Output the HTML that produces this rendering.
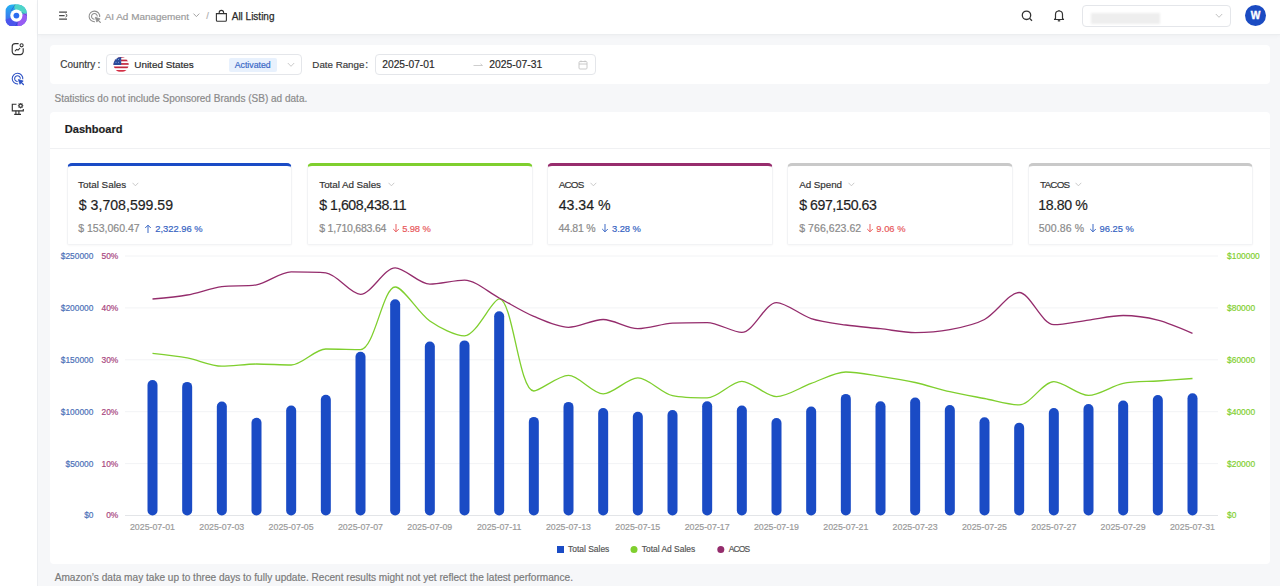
<!DOCTYPE html>
<html><head><meta charset="utf-8">
<style>
html,body{margin:0;padding:0}
body{width:1280px;height:586px;overflow:hidden;position:relative;background:#f6f7f9;font-family:"Liberation Sans",sans-serif}
.abs{position:absolute}
.t{position:absolute;white-space:pre;-webkit-text-stroke:0.1px currentColor}
.side{position:absolute;left:0;top:0;width:38px;height:586px;background:#fff;border-right:1px solid #eceef1;box-sizing:border-box}
.head{position:absolute;left:38px;top:0;width:1242px;height:35px;background:#fff;border-bottom:1px solid #eceef0;box-sizing:border-box;box-shadow:0 1px 4px rgba(0,0,0,0.035)}
.panel{position:absolute;left:50px;width:1220px;background:#fff;border-radius:4px}
.card{position:absolute;top:162.5px;width:225.5px;height:82px;box-sizing:border-box;background:#fff;border:1px solid #f2f3f5;border-top:3px solid #1a4bc5;border-radius:5px 5px 2px 2px;box-shadow:0 1px 2px rgba(0,0,0,0.03)}
.box{position:absolute;background:#fff;border:1px solid #e4e6ea;border-radius:4px;box-sizing:border-box}
</style></head><body>
<div class="side"></div>
<div class="head"></div>
<div class="panel" style="top:45px;height:39px"></div>
<div class="panel" style="top:112px;height:452px"></div>
<div class="abs" style="left:50px;top:148px;width:1220px;height:1px;background:#f0f1f3"></div>

<!-- logo -->
<svg class="abs" style="left:0;top:0" width="38" height="34" viewBox="0 0 38 34">
  <defs>
    <clipPath id="lgc"><path d="M5.6 11.2A6.4 6.4 0 0 1 12 4.6H18A9 9 0 0 1 26.9 13.6V17.5A8.6 8.6 0 0 1 18.3 26.1H12A6.4 6.4 0 0 1 5.6 19.7Z"/></clipPath>
    <linearGradient id="lgL" x1="0" y1="0" x2="0" y2="1"><stop offset="0" stop-color="#22b6f3"/><stop offset="1" stop-color="#4a53ea"/></linearGradient>
  </defs>
  <g clip-path="url(#lgc)">
    <rect x="5" y="4" width="23" height="23" fill="url(#lgL)"/>
    <path d="M16.4 15.6L13.5 4L28 4L28 15Z" fill="#4fd5c8"/>
    <path d="M16.4 15.6L28 13L28 27L17 27Z" fill="#985cf3"/>
    <path d="M16.4 15.6L5 20L5 27L18 27Z" fill="#4b55ec"/>
    <path d="M10.9 11.2L15.4 4.2M21.8 12.3L27 15.5M18.5 21.2L15 27" stroke="#2b3aa8" stroke-width="0.7" opacity="0.6"/>
  </g>
  <circle cx="16.4" cy="15.6" r="6.1" fill="#fff"/>
  <circle cx="16.4" cy="15.6" r="2.9" fill="#2a6cf0"/>
</svg>
<!-- sidebar icons -->
<svg class="abs" style="left:0;top:34px" width="38" height="90" viewBox="0 34 38 90">
  <path d="M18.6 43.6H15.2A3 3 0 0 0 12.2 46.6V51.6A3 3 0 0 0 15.2 54.6H20.2A3 3 0 0 0 23.2 51.6V48.2" fill="none" stroke="#333" stroke-width="1.15"/>
  <circle cx="21.6" cy="45.3" r="1.55" fill="none" stroke="#333" stroke-width="1.1"/>
  <path d="M15.2 50.8L16.7 49.4 18 50.1 19.8 48.3" fill="none" stroke="#333" stroke-width="1.1" stroke-linecap="round" stroke-linejoin="round"/>
  <g transform="translate(17.5 78.6)" fill="none" stroke="#2c50c4" stroke-width="1.05">
    <path d="M5.28 0.6A5.3 5.3 0 1 0 0.6 5.28"/>
    <path d="M2.85 0.1A2.85 2.85 0 1 0 0.1 2.85"/>
    <path d="M0.9 0.9L5.7 2.5 3.6 3.6 2.5 5.7Z" fill="#2c50c4" stroke-linejoin="round" stroke-width="0.8"/>
    <path d="M3.4 3.4L5.9 5.9" stroke-linecap="round" stroke-width="1.2"/>
  </g>
  <path d="M16.5 104.2H12.3V110.8H23.3V109" fill="none" stroke="#333" stroke-width="1.15"/>
  <path d="M15.9 110.8V114.3M18.9 110.8V114.3M14.2 114.4H21" fill="none" stroke="#333" stroke-width="1.15"/>
  <circle cx="20.6" cy="105.7" r="1.7" fill="none" stroke="#333" stroke-width="1.3"/>
  <path d="M20.6 103V103.6M20.6 107.8V108.4M17.9 105.7H18.5M22.7 105.7H23.3M18.7 103.8L19.1 104.2M22.1 107.2L22.5 107.6M22.5 103.8L22.1 104.2M19.1 107.2L18.7 107.6" stroke="#333" stroke-width="1"/>
</svg>
<!-- header icons -->
<svg class="abs" style="left:38px;top:0" width="200" height="34" viewBox="38 0 200 34">
  <path d="M59.1 12H67M59.1 19H67M59.1 15.5H64.6" fill="none" stroke="#4a4a4a" stroke-width="1.25"/>
  <path d="M65.6 14L67.2 15.5 65.6 17" fill="none" stroke="#333" stroke-width="1"/>
  <g transform="translate(94.4 16.4)" fill="none" stroke="#8e8e8e" stroke-width="1.05">
    <path d="M5.28 0.6A5.3 5.3 0 1 0 0.6 5.28"/>
    <path d="M2.85 0.1A2.85 2.85 0 1 0 0.1 2.85"/>
    <path d="M0.9 0.9L5.7 2.5 3.6 3.6 2.5 5.7Z" fill="#8e8e8e" stroke-linejoin="round" stroke-width="0.8"/>
    <path d="M3.4 3.4L5.9 5.9" stroke-linecap="round" stroke-width="1.2"/>
  </g>
  <path d="M193.5 13.6L196.4 16.6 199.3 13.6" fill="none" stroke="#9a9a9a" stroke-width="0.9"/>
  <path d="M216.4 13.6H226.4L226.4 20.2A1 1 0 0 1 225.4 21.2H217.4A1 1 0 0 1 216.4 20.2Z" fill="none" stroke="#333" stroke-width="1.1"/>
  <path d="M219.2 13.6V12.6A2.2 2.2 0 0 1 223.6 12.6V13.6" fill="none" stroke="#333" stroke-width="1.1"/>
</svg>
<!-- search, bell -->
<svg class="abs" style="left:1021px;top:10px" width="13" height="12" viewBox="0 0 13 12">
  <circle cx="5.5" cy="5.3" r="4.2" fill="none" stroke="#333" stroke-width="1.3"/>
  <path d="M8.6 8.4L11 10.8" stroke="#333" stroke-width="1.3"/>
</svg>
<svg class="abs" style="left:1053px;top:9px" width="12" height="13" viewBox="0 0 12 13">
  <path d="M2.5 9.5V5.5A3.5 3.5 0 0 1 9.5 5.5V9.5L10.5 10.5H1.5Z" fill="none" stroke="#333" stroke-width="1.2" stroke-linejoin="round"/>
  <path d="M6 1V2" stroke="#333" stroke-width="1.2"/>
  <path d="M4.8 11.8H7.2" stroke="#333" stroke-width="1.3"/>
</svg>
<div class="box" style="left:1082px;top:4.5px;width:149px;height:22px"></div>
<div class="abs" style="left:1091px;top:13px;width:69px;height:10.5px;background:#eee;filter:blur(1px)"></div>
<svg class="abs" style="left:1215px;top:12.5px" width="8" height="6" viewBox="0 0 8 6"><path d="M0.8 1L4 4.3 7.2 1" fill="none" stroke="#bbb" stroke-width="0.9"/></svg>
<div class="abs" style="left:1245px;top:4.6px;width:21.3px;height:21.3px;border-radius:50%;background:#1b4bc2"></div>
<svg class="abs" style="left:1240px;top:0" width="32" height="32" viewBox="1240 0 32 32"><text x="1255.65" y="18.9" text-anchor="middle" font-family="Liberation Sans" font-weight="700" font-size="10.2" fill="#fff" stroke="#fff" stroke-width="0.35">W</text></svg>

<!-- filter controls -->
<div class="box" style="left:106px;top:54.2px;width:195.5px;height:21px"></div>
<svg class="abs" style="left:108px;top:53px" width="26" height="24" viewBox="108 53 26 24">
  <defs><clipPath id="fc"><circle cx="121.1" cy="64.6" r="7.6"/></clipPath></defs>
  <g clip-path="url(#fc)">
    <rect x="113" y="56" width="16" height="17" fill="#fff"/>
    <rect x="113" y="56.2" width="16" height="1.6" fill="#c2283f"/>
    <rect x="113" y="59.6" width="16" height="1.7" fill="#c2283f"/>
    <rect x="113" y="63.1" width="16" height="1.7" fill="#c2283f"/>
    <rect x="113" y="66.5" width="16" height="1.7" fill="#c2283f"/>
    <rect x="113" y="70" width="16" height="1.7" fill="#d42f45"/>
    <rect x="113" y="56" width="8.2" height="9" fill="#2b4b9b"/>
    <g fill="#9fb4e6"><circle cx="116" cy="59.5" r="0.5"/><circle cx="118.5" cy="59.5" r="0.5"/><circle cx="116" cy="62.3" r="0.5"/><circle cx="118.5" cy="62.3" r="0.5"/><circle cx="120.3" cy="60.9" r="0.4"/></g>
  </g>
</svg>
<div class="abs" style="left:229px;top:58px;width:47.5px;height:14px;background:#e8f1fd;border-radius:2px"></div>
<svg class="abs" style="left:286.5px;top:61.6px" width="8" height="6" viewBox="0 0 8 6"><path d="M0.8 1L4 4.3 7.2 1" fill="none" stroke="#c4c4c4" stroke-width="0.9"/></svg>
<div class="box" style="left:374.5px;top:54.2px;width:221px;height:21px"></div>
<svg class="abs" style="left:473px;top:62px" width="11" height="6" viewBox="0 0 11 6"><path d="M0.5 3.5H9.5M7.5 1.8L9.5 3.5" fill="none" stroke="#c8c8c8" stroke-width="0.9"/></svg>
<svg class="abs" style="left:577.5px;top:60px" width="10" height="10" viewBox="0 0 10 10">
  <rect x="1" y="1.5" width="8" height="7.5" rx="1" fill="none" stroke="#c4c4c4" stroke-width="0.9"/>
  <path d="M1 4H9M3 0.5V2.2M7 0.5V2.2" stroke="#c4c4c4" stroke-width="0.9"/>
</svg>

<div class="card" style="left:66.8px;border-top-color:#1a4bc5"></div>
<svg class="abs" style="left:132.0px;top:182px" width="7" height="5" viewBox="0 0 7 5"><path d="M0.5 0.8L3.4 3.8 6.3 0.8" fill="none" stroke="#c4c4c4" stroke-width="0.9"/></svg>
<svg class="abs" style="left:144.2px;top:223.5px" width="8" height="9" viewBox="0 0 8 9"><path d="M4 9V1.2M1.2 4l2.8-2.8 2.8 2.8" fill="none" stroke="#3462c2" stroke-width="0.95"/></svg>
<div class="card" style="left:307.0px;border-top-color:#7fcf2e"></div>
<svg class="abs" style="left:387.5px;top:182px" width="7" height="5" viewBox="0 0 7 5"><path d="M0.5 0.8L3.4 3.8 6.3 0.8" fill="none" stroke="#c4c4c4" stroke-width="0.9"/></svg>
<svg class="abs" style="left:391.5px;top:223.5px" width="8" height="9" viewBox="0 0 8 9"><path d="M4 0V7.8M1.2 5l2.8 2.8 2.8-2.8" fill="none" stroke="#e8575a" stroke-width="0.95"/></svg>
<div class="card" style="left:547.2px;border-top-color:#972d6d"></div>
<svg class="abs" style="left:590.0px;top:182px" width="7" height="5" viewBox="0 0 7 5"><path d="M0.5 0.8L3.4 3.8 6.3 0.8" fill="none" stroke="#c4c4c4" stroke-width="0.9"/></svg>
<svg class="abs" style="left:600.8px;top:223.5px" width="8" height="9" viewBox="0 0 8 9"><path d="M4 0V7.8M1.2 5l2.8 2.8 2.8-2.8" fill="none" stroke="#3462c2" stroke-width="0.95"/></svg>
<div class="card" style="left:787.4px;border-top-color:#c9c9c9"></div>
<svg class="abs" style="left:847.5px;top:182px" width="7" height="5" viewBox="0 0 7 5"><path d="M0.5 0.8L3.4 3.8 6.3 0.8" fill="none" stroke="#c4c4c4" stroke-width="0.9"/></svg>
<svg class="abs" style="left:865.7px;top:223.5px" width="8" height="9" viewBox="0 0 8 9"><path d="M4 0V7.8M1.2 5l2.8 2.8 2.8-2.8" fill="none" stroke="#e8575a" stroke-width="0.95"/></svg>
<div class="card" style="left:1027.6px;border-top-color:#c9c9c9"></div>
<svg class="abs" style="left:1075.3px;top:182px" width="7" height="5" viewBox="0 0 7 5"><path d="M0.5 0.8L3.4 3.8 6.3 0.8" fill="none" stroke="#c4c4c4" stroke-width="0.9"/></svg>
<svg class="abs" style="left:1089.1px;top:223.5px" width="8" height="9" viewBox="0 0 8 9"><path d="M4 0V7.8M1.2 5l2.8 2.8 2.8-2.8" fill="none" stroke="#3462c2" stroke-width="0.95"/></svg>

<svg class="abs" style="left:0;top:0" width="1280" height="586" viewBox="0 0 1280 586">
<line x1="125" x2="1218" y1="515.5" y2="515.5" stroke="#e3e5e8" stroke-width="1"/>
<line x1="125" x2="1218" y1="463.6" y2="463.6" stroke="#f2f3f5" stroke-width="1"/>
<line x1="125" x2="1218" y1="411.7" y2="411.7" stroke="#f2f3f5" stroke-width="1"/>
<line x1="125" x2="1218" y1="359.8" y2="359.8" stroke="#f2f3f5" stroke-width="1"/>
<line x1="125" x2="1218" y1="307.9" y2="307.9" stroke="#f2f3f5" stroke-width="1"/>
<line x1="125" x2="1218" y1="256.0" y2="256.0" stroke="#f2f3f5" stroke-width="1"/>
<rect x="147.50" y="380.0" width="10" height="135.5" rx="5" ry="5" fill="#1a4bc5"/>
<rect x="182.17" y="381.9" width="10" height="133.6" rx="5" ry="5" fill="#1a4bc5"/>
<rect x="216.83" y="401.5" width="10" height="114.0" rx="5" ry="5" fill="#1a4bc5"/>
<rect x="251.50" y="417.8" width="10" height="97.7" rx="5" ry="5" fill="#1a4bc5"/>
<rect x="286.17" y="405.5" width="10" height="110.0" rx="5" ry="5" fill="#1a4bc5"/>
<rect x="320.83" y="394.8" width="10" height="120.7" rx="5" ry="5" fill="#1a4bc5"/>
<rect x="355.50" y="351.8" width="10" height="163.7" rx="5" ry="5" fill="#1a4bc5"/>
<rect x="390.17" y="299.2" width="10" height="216.3" rx="5" ry="5" fill="#1a4bc5"/>
<rect x="424.83" y="341.6" width="10" height="173.9" rx="5" ry="5" fill="#1a4bc5"/>
<rect x="459.50" y="340.4" width="10" height="175.1" rx="5" ry="5" fill="#1a4bc5"/>
<rect x="494.17" y="311.2" width="10" height="204.3" rx="5" ry="5" fill="#1a4bc5"/>
<rect x="528.83" y="416.9" width="10" height="98.6" rx="5" ry="5" fill="#1a4bc5"/>
<rect x="563.50" y="401.9" width="10" height="113.6" rx="5" ry="5" fill="#1a4bc5"/>
<rect x="598.17" y="408.0" width="10" height="107.5" rx="5" ry="5" fill="#1a4bc5"/>
<rect x="632.83" y="411.7" width="10" height="103.8" rx="5" ry="5" fill="#1a4bc5"/>
<rect x="667.50" y="410.0" width="10" height="105.5" rx="5" ry="5" fill="#1a4bc5"/>
<rect x="702.17" y="401.2" width="10" height="114.3" rx="5" ry="5" fill="#1a4bc5"/>
<rect x="736.83" y="405.5" width="10" height="110.0" rx="5" ry="5" fill="#1a4bc5"/>
<rect x="771.50" y="418.1" width="10" height="97.4" rx="5" ry="5" fill="#1a4bc5"/>
<rect x="806.17" y="406.5" width="10" height="109.0" rx="5" ry="5" fill="#1a4bc5"/>
<rect x="840.83" y="393.9" width="10" height="121.6" rx="5" ry="5" fill="#1a4bc5"/>
<rect x="875.50" y="401.2" width="10" height="114.3" rx="5" ry="5" fill="#1a4bc5"/>
<rect x="910.17" y="397.5" width="10" height="118.0" rx="5" ry="5" fill="#1a4bc5"/>
<rect x="944.83" y="405.0" width="10" height="110.5" rx="5" ry="5" fill="#1a4bc5"/>
<rect x="979.50" y="417.2" width="10" height="98.3" rx="5" ry="5" fill="#1a4bc5"/>
<rect x="1014.17" y="422.7" width="10" height="92.8" rx="5" ry="5" fill="#1a4bc5"/>
<rect x="1048.83" y="408.0" width="10" height="107.5" rx="5" ry="5" fill="#1a4bc5"/>
<rect x="1083.50" y="404.0" width="10" height="111.5" rx="5" ry="5" fill="#1a4bc5"/>
<rect x="1118.17" y="400.6" width="10" height="114.9" rx="5" ry="5" fill="#1a4bc5"/>
<rect x="1152.83" y="395.1" width="10" height="120.4" rx="5" ry="5" fill="#1a4bc5"/>
<rect x="1187.50" y="393.2" width="10" height="122.3" rx="5" ry="5" fill="#1a4bc5"/>
<path d="M152.50,353.30C152.50,353.30 176.87,355.98 187.17,357.90C197.67,359.85 211.30,366.20 221.83,366.20C232.10,366.20 246.09,364.00 256.50,364.00C266.89,364.00 281.27,365.00 291.17,365.00C302.07,365.00 314.93,349.00 325.83,349.00C335.73,349.00 353.71,349.60 360.50,349.60C374.51,349.60 382.78,287.00 395.17,287.00C403.58,287.00 418.12,312.76 429.83,321.00C438.92,327.40 455.62,335.80 464.50,335.80C476.42,335.80 492.10,298.90 499.17,298.90C512.90,298.90 518.83,391.00 533.83,391.00C539.63,391.00 558.27,375.40 568.50,375.40C579.07,375.40 592.62,393.90 603.17,393.90C613.42,393.90 627.54,377.90 637.83,377.90C648.34,377.90 661.50,393.23 672.50,395.70C682.30,397.90 697.29,397.90 707.17,397.90C718.09,397.90 731.36,381.30 741.83,381.30C752.16,381.30 765.99,396.60 776.50,396.60C786.79,396.60 800.68,387.12 811.17,383.40C821.48,379.74 835.21,372.00 845.83,372.00C856.01,372.00 870.14,374.83 880.50,376.40C890.94,377.98 904.86,380.23 915.17,382.50C925.66,384.82 939.35,389.28 949.83,391.70C960.15,394.08 974.09,396.52 984.50,398.50C994.89,400.48 1009.65,404.90 1019.17,404.90C1030.45,404.90 1042.85,381.60 1053.83,381.60C1063.65,381.60 1078.01,395.40 1088.50,395.40C1098.81,395.40 1112.48,385.62 1123.17,383.40C1133.28,381.30 1147.43,381.73 1157.83,381.00C1168.23,380.26 1192.50,378.50 1192.50,378.50" fill="none" stroke="#7fcf2e" stroke-width="1.3"/>
<path d="M152.50,299.00C152.50,299.00 176.88,296.84 187.17,295.00C197.68,293.12 211.29,288.15 221.83,286.60C232.09,285.09 246.43,286.60 256.50,284.80C267.23,282.88 280.43,271.90 291.17,271.90C301.23,271.90 316.28,271.90 325.83,272.80C337.08,273.86 350.45,294.30 360.50,294.30C371.25,294.30 384.10,267.80 395.17,267.80C404.90,267.80 418.94,284.20 429.83,284.20C439.74,284.20 454.67,280.20 464.50,280.20C475.47,280.20 488.80,292.59 499.17,298.00C509.60,303.45 523.03,311.84 533.83,316.40C543.83,320.63 557.98,327.30 568.50,327.30C578.78,327.30 592.82,319.50 603.17,319.50C613.62,319.50 627.32,328.70 637.83,328.70C648.12,328.70 662.04,323.81 672.50,323.20C682.84,322.60 696.97,322.60 707.17,322.60C717.77,322.60 732.67,332.40 741.83,332.40C753.47,332.40 765.17,302.60 776.50,302.60C785.97,302.60 800.35,315.11 811.17,318.60C821.15,321.83 835.38,323.48 845.83,325.00C856.18,326.51 870.10,327.55 880.50,328.70C890.90,329.86 904.75,332.70 915.17,332.70C925.55,332.70 939.63,331.64 949.83,329.70C960.43,327.68 975.11,324.54 984.50,319.50C995.91,313.38 1009.15,292.50 1019.17,292.50C1029.95,292.50 1041.87,324.70 1053.83,324.70C1062.67,324.70 1078.10,321.48 1088.50,320.10C1098.90,318.72 1112.77,315.50 1123.17,315.50C1133.57,315.50 1147.74,317.51 1157.83,320.10C1168.54,322.85 1192.50,333.30 1192.50,333.30" fill="none" stroke="#942c6c" stroke-width="1.3"/>
<rect x="557" y="546" width="7" height="7" fill="#1a4bc5"/>
<circle cx="634" cy="549.5" r="3.5" fill="#7fcf2e"/>
<circle cx="720.8" cy="549.5" r="3.5" fill="#942c6c"/>
</svg>

<svg class="abs" style="left:0;top:0" width="1280" height="586" viewBox="0 0 1280 586" font-family="Liberation Sans" stroke-width="0.18">
<text x="104.68" y="19.80" font-size="9.94" fill="#9a9a9a" stroke="#9a9a9a" font-weight="400">AI Ad Management</text>
<text x="206.25" y="19.20" font-size="9.50" fill="#b0b0b0" stroke="#b0b0b0" font-weight="400" letter-spacing="-0.341">/</text>
<text x="231.73" y="19.70" font-size="9.99" fill="#2a2a2a" stroke="#2a2a2a" font-weight="400" style="stroke-width:0.25px">All Listing</text>
<text x="60.34" y="68.20" font-size="10.01" fill="#3a3a3a" stroke="#3a3a3a" font-weight="400">Country</text>
<text x="97.41" y="68.20" font-size="10.30" fill="#3a3a3a" stroke="#3a3a3a" font-weight="400" letter-spacing="0.411">:</text>
<text x="134.24" y="68.20" font-size="9.93" fill="#2a2a2a" stroke="#2a2a2a" font-weight="400">United States</text>
<text x="234.73" y="68.20" font-size="8.75" fill="#3766c6" stroke="#3766c6" font-weight="400">Activated</text>
<text x="312.35" y="68.20" font-size="9.75" fill="#3a3a3a" stroke="#3a3a3a" font-weight="400">Date Range</text>
<text x="365.31" y="68.20" font-size="10.30" fill="#3a3a3a" stroke="#3a3a3a" font-weight="400" letter-spacing="0.311">:</text>
<text x="382.24" y="68.20" font-size="10.25" fill="#2a2a2a" stroke="#2a2a2a" font-weight="400">2025-07-01</text>
<text x="489.23" y="68.20" font-size="10.37" fill="#2a2a2a" stroke="#2a2a2a" font-weight="400">2025-07-31</text>
<text x="54.49" y="101.60" font-size="10.02" fill="#8a8a8a" stroke="#8a8a8a" font-weight="400">Statistics do not include Sponsored Brands (SB) ad data.</text>
<text x="64.86" y="132.80" font-size="11.05" fill="#1e1e1e" stroke="#1e1e1e" font-weight="700">Dashboard</text>
<text x="78.08" y="187.70" font-size="9.86" fill="#333" stroke="#333" font-weight="400">Total Sales</text>
<text x="78.84" y="210.10" font-size="14.13" fill="#1e1e1e" stroke="#1e1e1e" font-weight="400">$ 3,708,599.59</text>
<text x="78.23" y="231.90" font-size="10.54" fill="#8a8a8a" stroke="#8a8a8a" font-weight="400">$ 153,060.47</text>
<text x="155.28" y="231.90" font-size="9.37" fill="#3462c2" stroke="#3462c2" font-weight="400">2,322.96 %</text>
<text x="319.33" y="187.70" font-size="9.86" fill="#333" stroke="#333" font-weight="400" letter-spacing="-0.053">Total Ad Sales</text>
<text x="319.19" y="210.10" font-size="14.13" fill="#1e1e1e" stroke="#1e1e1e" font-weight="400" letter-spacing="-0.452">$ 1,608,438.11</text>
<text x="319.23" y="231.90" font-size="10.54" fill="#8a8a8a" stroke="#8a8a8a" font-weight="400" letter-spacing="-0.239">$ 1,710,683.64</text>
<text x="402.18" y="231.90" font-size="9.37" fill="#e8575a" stroke="#e8575a" font-weight="400" letter-spacing="-0.112">5.98 %</text>
<text x="558.63" y="187.70" font-size="9.86" fill="#333" stroke="#333" font-weight="400" letter-spacing="-0.721">ACOS</text>
<text x="558.63" y="210.10" font-size="14.13" fill="#1e1e1e" stroke="#1e1e1e" font-weight="400" letter-spacing="0.031">43.34 %</text>
<text x="558.41" y="231.90" font-size="10.54" fill="#8a8a8a" stroke="#8a8a8a" font-weight="400" letter-spacing="-0.243">44.81 %</text>
<text x="611.99" y="231.90" font-size="9.37" fill="#3462c2" stroke="#3462c2" font-weight="400" letter-spacing="-0.056">3.28 %</text>
<text x="799.33" y="187.70" font-size="9.86" fill="#333" stroke="#333" font-weight="400" letter-spacing="-0.078">Ad Spend</text>
<text x="799.19" y="210.10" font-size="14.13" fill="#1e1e1e" stroke="#1e1e1e" font-weight="400" letter-spacing="-0.437">$ 697,150.63</text>
<text x="799.23" y="231.90" font-size="10.54" fill="#8a8a8a" stroke="#8a8a8a" font-weight="400" letter-spacing="0.045">$ 766,623.62</text>
<text x="876.31" y="231.90" font-size="9.37" fill="#e8575a" stroke="#e8575a" font-weight="400" letter-spacing="0.021">9.06 %</text>
<text x="1039.93" y="187.70" font-size="9.86" fill="#333" stroke="#333" font-weight="400" letter-spacing="-0.740">TACOS</text>
<text x="1038.18" y="210.10" font-size="14.13" fill="#1e1e1e" stroke="#1e1e1e" font-weight="400" letter-spacing="-0.377">18.80 %</text>
<text x="1038.83" y="231.90" font-size="10.54" fill="#8a8a8a" stroke="#8a8a8a" font-weight="400" letter-spacing="0.108">500.86 %</text>
<text x="1099.51" y="231.90" font-size="9.37" fill="#3462c2" stroke="#3462c2" font-weight="400" letter-spacing="0.016">96.25 %</text>
<text x="84.18" y="518.40" font-size="8.40" fill="#4b70b8" stroke="#4b70b8" font-weight="400">$0</text>
<text x="106.15" y="518.40" font-size="8.40" fill="#a8467e" stroke="#a8467e" font-weight="400">0%</text>
<text x="1227.11" y="518.40" font-size="8.40" fill="#7fcf2e" stroke="#7fcf2e" font-weight="400">$0</text>
<text x="65.48" y="466.50" font-size="8.40" fill="#4b70b8" stroke="#4b70b8" font-weight="400">$50000</text>
<text x="101.48" y="466.50" font-size="8.40" fill="#a8467e" stroke="#a8467e" font-weight="400">10%</text>
<text x="1227.11" y="466.50" font-size="8.40" fill="#7fcf2e" stroke="#7fcf2e" font-weight="400">$20000</text>
<text x="60.81" y="414.60" font-size="8.40" fill="#4b70b8" stroke="#4b70b8" font-weight="400">$100000</text>
<text x="101.48" y="414.60" font-size="8.40" fill="#a8467e" stroke="#a8467e" font-weight="400">20%</text>
<text x="1227.11" y="414.60" font-size="8.40" fill="#7fcf2e" stroke="#7fcf2e" font-weight="400">$40000</text>
<text x="60.81" y="362.70" font-size="8.40" fill="#4b70b8" stroke="#4b70b8" font-weight="400">$150000</text>
<text x="101.48" y="362.70" font-size="8.40" fill="#a8467e" stroke="#a8467e" font-weight="400">30%</text>
<text x="1227.11" y="362.70" font-size="8.40" fill="#7fcf2e" stroke="#7fcf2e" font-weight="400">$60000</text>
<text x="60.81" y="310.80" font-size="8.40" fill="#4b70b8" stroke="#4b70b8" font-weight="400">$200000</text>
<text x="101.48" y="310.80" font-size="8.40" fill="#a8467e" stroke="#a8467e" font-weight="400">40%</text>
<text x="1227.11" y="310.80" font-size="8.40" fill="#7fcf2e" stroke="#7fcf2e" font-weight="400">$80000</text>
<text x="60.81" y="258.90" font-size="8.40" fill="#4b70b8" stroke="#4b70b8" font-weight="400">$250000</text>
<text x="101.48" y="258.90" font-size="8.40" fill="#a8467e" stroke="#a8467e" font-weight="400">50%</text>
<text x="1227.11" y="258.90" font-size="8.40" fill="#7fcf2e" stroke="#7fcf2e" font-weight="400">$100000</text>
<text x="129.96" y="530.00" font-size="8.81" fill="#9a9a9a" stroke="#9a9a9a" font-weight="400">2025-07-01</text>
<text x="199.27" y="530.00" font-size="8.81" fill="#9a9a9a" stroke="#9a9a9a" font-weight="400">2025-07-03</text>
<text x="268.60" y="530.00" font-size="8.81" fill="#9a9a9a" stroke="#9a9a9a" font-weight="400">2025-07-05</text>
<text x="337.96" y="530.00" font-size="8.81" fill="#9a9a9a" stroke="#9a9a9a" font-weight="400">2025-07-07</text>
<text x="407.28" y="530.00" font-size="8.81" fill="#9a9a9a" stroke="#9a9a9a" font-weight="400">2025-07-09</text>
<text x="476.95" y="530.00" font-size="8.81" fill="#9a9a9a" stroke="#9a9a9a" font-weight="400">2025-07-11</text>
<text x="545.94" y="530.00" font-size="8.81" fill="#9a9a9a" stroke="#9a9a9a" font-weight="400">2025-07-13</text>
<text x="615.26" y="530.00" font-size="8.81" fill="#9a9a9a" stroke="#9a9a9a" font-weight="400">2025-07-15</text>
<text x="684.63" y="530.00" font-size="8.81" fill="#9a9a9a" stroke="#9a9a9a" font-weight="400">2025-07-17</text>
<text x="753.95" y="530.00" font-size="8.81" fill="#9a9a9a" stroke="#9a9a9a" font-weight="400">2025-07-19</text>
<text x="823.29" y="530.00" font-size="8.81" fill="#9a9a9a" stroke="#9a9a9a" font-weight="400">2025-07-21</text>
<text x="892.60" y="530.00" font-size="8.81" fill="#9a9a9a" stroke="#9a9a9a" font-weight="400">2025-07-23</text>
<text x="961.93" y="530.00" font-size="8.81" fill="#9a9a9a" stroke="#9a9a9a" font-weight="400">2025-07-25</text>
<text x="1031.30" y="530.00" font-size="8.81" fill="#9a9a9a" stroke="#9a9a9a" font-weight="400">2025-07-27</text>
<text x="1100.62" y="530.00" font-size="8.81" fill="#9a9a9a" stroke="#9a9a9a" font-weight="400">2025-07-29</text>
<text x="1169.96" y="530.00" font-size="8.81" fill="#9a9a9a" stroke="#9a9a9a" font-weight="400">2025-07-31</text>
<text x="568.11" y="551.90" font-size="8.44" fill="#555" stroke="#555" font-weight="400">Total Sales</text>
<text x="641.81" y="551.90" font-size="8.44" fill="#555" stroke="#555" font-weight="400">Total Ad Sales</text>
<text x="728.73" y="551.90" font-size="8.44" fill="#555" stroke="#555" font-weight="400" letter-spacing="-0.839">ACOS</text>
<text x="54.73" y="580.90" font-size="10.11" fill="#7a7a7a" stroke="#7a7a7a" font-weight="400">Amazon’s data may take up to three days to fully update. Recent results might not yet reflect the latest performance.</text>
</svg>
</body></html>
